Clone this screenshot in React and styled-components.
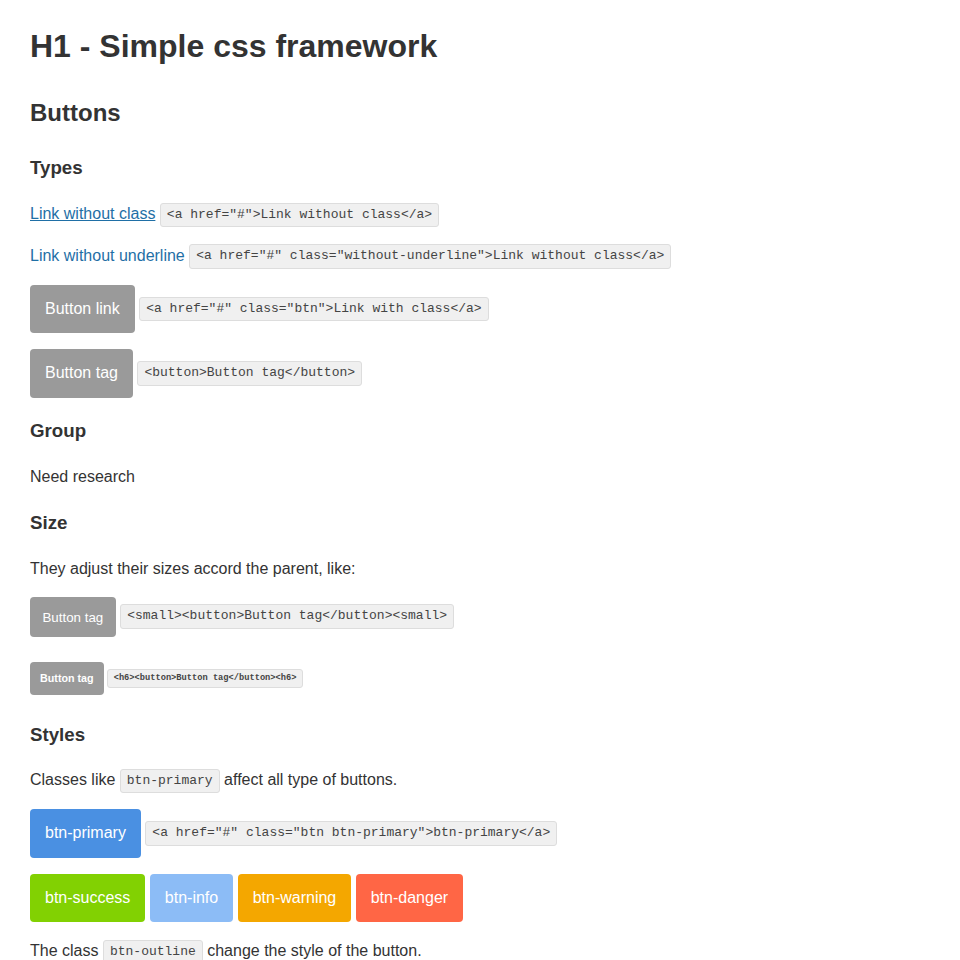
import React from 'react';
import styled, { createGlobalStyle, css } from 'styled-components';

const GlobalStyle = createGlobalStyle`
  html, body {
    margin: 0;
    padding: 0;
    background: #fff;
  }
  body {
    font-family: "Liberation Sans", Arial, Helvetica, sans-serif;
    font-size: 16px;
    line-height: 1.6;
    color: #333;
  }
`

const Page = styled.main`
  padding: 0 30px;
`

const H1 = styled.h1`
  font-size: 32px;
  margin: 0.67em 0;
  color: #333;
`

const H2 = styled.h2`
  font-size: 24px;
  margin: 0.83em 0 21px;
  color: #333;
`

const H3 = styled.h3`
  font-size: 18.72px;
  margin: 18.72px 0 17.5px;
  color: #333;
`

const H6 = styled.h6`
  font-size: 10.72px;
  margin: 2.33em 0;
`

const P = styled.p`
  margin: 1em 0;
`

const Link = styled.a`
  color: #1f6fa6;
  text-decoration: ${p => (p.$plain ? 'none' : 'underline')};
`

const Code = styled.code`
  display: inline-block;
  font-family: "Liberation Mono", "Courier New", monospace;
  font-size: 0.8125em;
  line-height: 1.1;
  padding: 4px 6px;
  background: #f0f0f0;
  border: 1px solid #ddd;
  border-radius: 3px;
  color: #444;
  vertical-align: middle;
`

const colors = {
  default: '#9a9a9a',
  primary: '#4a90e2',
  success: '#82d102',
  info: '#8cbcf6',
  warning: '#f4a700',
  danger: '#ff6645',
}

const buttonStyle = css`
  display: inline-block;
  font-family: inherit;
  font-size: inherit;
  font-weight: inherit;
  line-height: 1.15;
  padding: 0.94em 0.9375em;
  border: none;
  border-radius: 4px;
  color: #fff;
  text-decoration: none;
  cursor: pointer;
  vertical-align: middle;
  background-color: ${p => colors[p.$variant || 'default']};
`

const Button = styled.button`
  ${buttonStyle}
`

const ButtonLink = styled.a`
  ${buttonStyle}
`

const Small = styled.small`
  font-size: 13.33px;
`

export default function App() {
  return (
    <>
      <GlobalStyle />
      <Page>
        <H1>H1 - Simple css framework</H1>
        <H2>Buttons</H2>

        <H3>Types</H3>
        <P>
          <Link href="#">Link without class</Link>{' '}
          <Code>{'<a href="#">Link without class</a>'}</Code>
        </P>
        <P>
          <Link href="#" $plain>Link without underline</Link>{' '}
          <Code>{'<a href="#" class="without-underline">Link without class</a>'}</Code>
        </P>
        <P>
          <ButtonLink href="#">Button link</ButtonLink>{' '}
          <Code>{'<a href="#" class="btn">Link with class</a>'}</Code>
        </P>
        <P>
          <Button>Button tag</Button>{' '}
          <Code>{'<button>Button tag</button>'}</Code>
        </P>

        <H3>Group</H3>
        <P>Need research</P>

        <H3>Size</H3>
        <P>They adjust their sizes accord the parent, like:</P>
        <P>
          <Small><Button>Button tag</Button></Small>{' '}
          <Code>{'<small><button>Button tag</button><small>'}</Code>
        </P>
        <H6>
          <Button>Button tag</Button>{' '}
          <Code>{'<h6><button>Button tag</button><h6>'}</Code>
        </H6>

        <H3>Styles</H3>
        <P>
          Classes like <Code>btn-primary</Code> affect all type of buttons.
        </P>
        <P>
          <ButtonLink href="#" $variant="primary">btn-primary</ButtonLink>{' '}
          <Code>{'<a href="#" class="btn btn-primary">btn-primary</a>'}</Code>
        </P>
        <P>
          <Button $variant="success">btn-success</Button>{' '}
          <Button $variant="info">btn-info</Button>{' '}
          <Button $variant="warning">btn-warning</Button>{' '}
          <Button $variant="danger">btn-danger</Button>
        </P>
        <P>
          The class <Code>btn-outline</Code> change the style of the button.
        </P>
      </Page>
    </>
  );
}
